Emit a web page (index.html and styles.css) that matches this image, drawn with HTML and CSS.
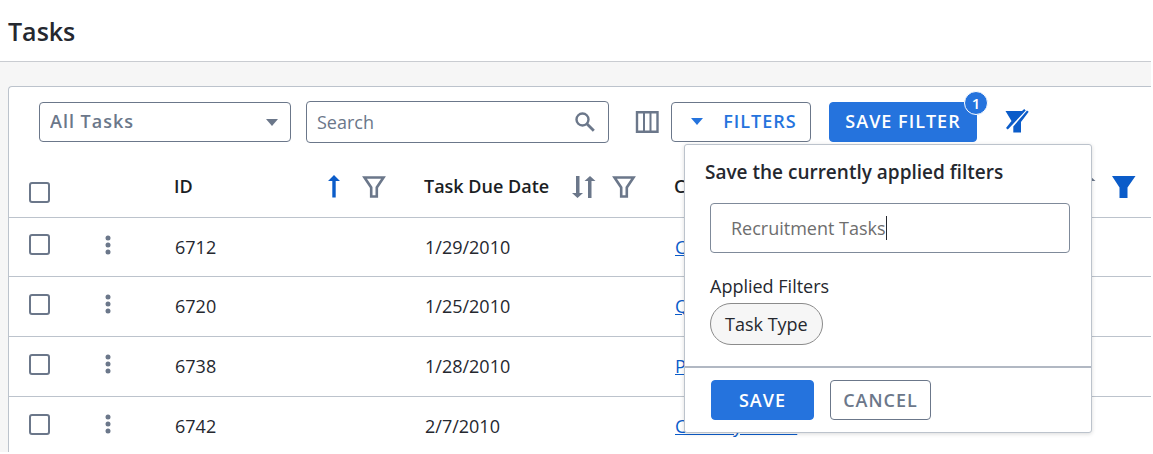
FILE: index.html
```html
<!DOCTYPE html>
<html lang="en">
<head>
    <meta charset="UTF-8">
    <title>Tasks</title>
    <link rel="stylesheet" href="styles.css">
</head>
<body>
<svg class="sprite" aria-hidden="true">
    <symbol id="funnel" viewBox="0 0 24 24">
        <path d="M2.500 2.500h19l-6.700 10v9h-5.600v-9z" fill="none" stroke="currentColor" stroke-width="2.600"/>
    </symbol>
    <symbol id="funnel-full" viewBox="0 0 24 24">
        <path d="M0 1h23.500l-8 11.500v10.500h-8v-10.500z" fill="currentColor"/>
    </symbol>
    <symbol id="sort" viewBox="0 0 24 24">
        <path d="M4 1h3.500v17h3.500l-5.500 5-5.500-5h4zM16 23h3.500v-17h4l-5.500-5-5.500 5h3.500z" fill="currentColor"/>
    </symbol>
    <symbol id="sort-up" viewBox="0 0 24 24">
        <path d="M10.300 22.500h3.400v-16.500h4.300l-6-6-6 6h4.300z" fill="currentColor"/>
    </symbol>
    <symbol id="dots" viewBox="0 0 8 20">
        <g fill="currentColor"><circle cx="4" cy="3" r="2.500"/><circle cx="4" cy="10" r="2.500"/><circle cx="4" cy="17" r="2.500"/></g>
    </symbol>
    <symbol id="caret" viewBox="0 0 12 7">
        <path d="M0 0h12l-6 7z" fill="currentColor"/>
    </symbol>
</svg>
<div class="page">
    <header class="page-header">
        <h1>Tasks</h1>
    </header>
    <main class="panel">
        <div class="toolbar">
            <div class="select-box">
                <select aria-label="Task view">
                    <option>All Tasks</option>
                </select>
                <svg class="caret"><use href="#caret"/></svg>
            </div>
            <div class="search-box">
                <input type="search" placeholder="Search" aria-label="Search">
                <svg class="search-icon" viewBox="0 0 20 20">
                    <circle cx="7.500" cy="7.500" r="6" fill="none" stroke="currentColor" stroke-width="2.400"/>
                    <path d="M11.800 11.800l7 7" stroke="currentColor" stroke-width="2.800"/>
                </svg>
            </div>
            <button class="icon-btn columns-btn" type="button" aria-label="Columns">
                <svg class="icon" viewBox="0 0 24 24">
                    <path d="M2 2.300h20.500v19.400h-20.500z" fill="none" stroke="currentColor" stroke-width="2.400"/>
                    <path d="M9 2v20M15.500 2v20" stroke="currentColor" stroke-width="2"/>
                </svg>
            </button>
            <button class="btn filters-btn" type="button"><svg class="caret"><use href="#caret"/></svg>FILTERS</button>
            <div class="save-filter">
                <button class="btn primary" type="button">SAVE FILTER</button>
                <span class="badge">1</span>
                <form class="popover">
                    <div class="popover-body">
                        <h2><label for="filter-name">Save the currently applied filters</label></h2>
                        <div class="name-box">
                            <input id="filter-name" type="text" value="Recruitment Tasks">
                            <span class="cursor"></span>
                        </div>
                        <p>Applied Filters</p>
                        <span class="chip">Task Type</span>
                    </div>
                    <div class="popover-footer">
                        <button class="btn primary save" type="button">SAVE</button>
                        <button class="btn cancel" type="button">CANCEL</button>
                    </div>
                </form>
            </div>
            <button class="icon-btn clear-btn" type="button" aria-label="Clear filters">
                <svg class="icon" viewBox="0 -2 24 24">
                    <path d="M.5 0h16.500l2.200-2 1.500 1.500-17.900 19-1.800-1.500 5.500-7z" fill="currentColor"/>
                    <path d="M22 -.5l1.700 1.200-7.700 10.300v10.500h-7.700v-6z" fill="currentColor"/>
                </svg>
            </button>
        </div>
        <table class="tasks">
            <colgroup>
                <col class="col-check">
                <col class="col-menu">
                <col class="col-data">
                <col class="col-data">
                <col class="col-data">
                <col class="col-data">
            </colgroup>
            <thead>
            <tr>
                <th><input type="checkbox" aria-label="Select all"></th>
                <th></th>
                <th>
                    <div class="head">
                        <span>ID</span>
                        <svg class="icon active"><use href="#sort-up"/></svg>
                        <svg class="icon"><use href="#funnel"/></svg>
                    </div>
                </th>
                <th>
                    <div class="head">
                        <span>Task Due Date</span>
                        <svg class="icon"><use href="#sort"/></svg>
                        <svg class="icon"><use href="#funnel"/></svg>
                    </div>
                </th>
                <th>
                    <div class="head">
                        <span>C</span>
                        <svg class="icon"><use href="#sort"/></svg>
                        <svg class="icon"><use href="#funnel"/></svg>
                    </div>
                </th>
                <th>
                    <div class="head">
                        <span></span>
                        <svg class="icon"><use href="#sort"/></svg>
                        <svg class="icon active"><use href="#funnel-full"/></svg>
                    </div>
                </th>
            </tr>
            </thead>
            <tbody>
            <tr>
                <td><input type="checkbox" aria-label="Select 6712"></td>
                <td><button class="icon-btn" type="button" aria-label="Actions"><svg class="dots"><use href="#dots"/></svg></button></td>
                <td>6712</td>
                <td>1/29/2010</td>
                <td><a href="#">C</a></td>
                <td></td>
            </tr>
            <tr>
                <td><input type="checkbox" aria-label="Select 6720"></td>
                <td><button class="icon-btn" type="button" aria-label="Actions"><svg class="dots"><use href="#dots"/></svg></button></td>
                <td>6720</td>
                <td>1/25/2010</td>
                <td><a href="#">Q</a></td>
                <td></td>
            </tr>
            <tr>
                <td><input type="checkbox" aria-label="Select 6738"></td>
                <td><button class="icon-btn" type="button" aria-label="Actions"><svg class="dots"><use href="#dots"/></svg></button></td>
                <td>6738</td>
                <td>1/28/2010</td>
                <td><a href="#">P</a></td>
                <td></td>
            </tr>
            <tr>
                <td><input type="checkbox" aria-label="Select 6742"></td>
                <td><button class="icon-btn" type="button" aria-label="Actions"><svg class="dots"><use href="#dots"/></svg></button></td>
                <td>6742</td>
                <td>2/7/2010</td>
                <td><a href="#">Country Check</a></td>
                <td></td>
            </tr>
            </tbody>
        </table>
    </main>
</div>
</body>
</html>
```
FILE: styles.css
```css
* {
    margin: 0;
    padding: 0;
    box-sizing: border-box;
}

body {
    padding: 0 2px 2px 0;
    height: 100vh;
    overflow: hidden;
    background-color: #fff;
    font-family: "Open Sans", sans-serif;
    font-size: 18px;
    color: #25282f;
}

input, select, button {
    font: inherit;
    color: inherit;
}

svg {
    display: block;
    flex: none;
}

.sprite {
    position: absolute;
    width: 0;
    height: 0;
}

.page {
    height: 100%;
    display: flex;
    flex-direction: column;
    overflow: hidden;
    background-color: #f6f6f6;
}

.page-header {
    padding: 13px 8px 12px;
    background-color: #fff;
    border-bottom: 1px solid #c9ccd1;
}

.page-header h1 {
    font-size: 25px;
    line-height: 36px;
    font-weight: 600;
}

.panel {
    flex: 1;
    margin: 24px 0 0 8px;
    background-color: #fff;
    border: 1px solid #bcc3cc;
    border-width: 1px 0 0 1px;
    border-radius: 4px 0 0 0;
}

/* toolbar */
.toolbar {
    display: flex;
    align-items: center;
    gap: 12px;
    padding: 14px 30px;
    color: #6b778a;
}

.select-box {
    position: relative;
    flex: 0 1 252px;
}

.select-box select {
    display: block;
    width: 100%;
    height: 40px;
    padding: 0 10px 2px;
    appearance: none;
    background-color: #fff;
    border: 1px solid #6b778a;
    border-radius: 4px;
    font-weight: 600;
    letter-spacing: 1px;
}

.caret {
    width: 12px;
    height: 7px;
}

.select-box .caret {
    position: absolute;
    right: 13px;
    top: 17px;
    pointer-events: none;
}

.search-box {
    flex: 0 1 303px;
    margin-left: 3px;
    height: 42px;
    padding: 0 13px 0 10px;
    display: flex;
    align-items: center;
    border: 1px solid #6b778a;
    border-radius: 4px;
}

.search-box input {
    flex: 1;
    min-width: 0;
    border: 0;
    outline: 0;
    appearance: none;
    background: none;
}

.search-box input::placeholder {
    color: #6b778a;
}

.search-icon {
    width: 20px;
    height: 20px;
}

.icon {
    width: 24px;
    height: 24px;
}

.icon-btn {
    border: 0;
    background: none;
    color: #6b778a;
}

.columns-btn {
    margin-left: 14px;
}

.btn {
    display: flex;
    align-items: center;
    justify-content: center;
    height: 40px;
    padding-bottom: 2px;
    border: 1px solid #6b778a;
    border-radius: 4px;
    background-color: #fff;
    color: #6b778a;
    font-weight: 600;
    letter-spacing: 1px;
    white-space: nowrap;
}

.btn.primary {
    background-color: #2573dd;
    border-color: #2573dd;
    color: #fff;
}

.filters-btn {
    width: 140px;
    padding-left: 6px;
    gap: 20px;
    color: #2573dd;
}

.save-filter {
    position: relative;
    margin-left: 6px;
}

.save-filter > .btn {
    width: 148px;
}

.badge {
    position: absolute;
    top: -11px;
    right: -11px;
    width: 24px;
    height: 24px;
    border-radius: 50%;
    border: 1px solid #fff;
    background-color: #2573dd;
    color: #fff;
    font-size: 15px;
    font-weight: 600;
    line-height: 22px;
    text-align: center;
}

.clear-btn {
    margin-left: 16px;
    padding-bottom: 3px;
    color: #0b5cc9;
}

/* save filter popover */
.popover {
    position: absolute;
    z-index: 1;
    top: 42px;
    right: -115px;
    width: 408px;
    background-color: #fff;
    border: 1px solid #bcc3cc;
    border-radius: 3px;
    box-shadow: 0 1px 4px rgba(0, 0, 0, .15);
    color: #25282f;
}

.popover-body {
    padding: 12px 21px 21px 25px;
}

.popover h2 {
    margin: 0 -5px;
    font-size: 19px;
    line-height: 30px;
    font-weight: 600;
}

.name-box {
    display: flex;
    align-items: center;
    height: 50px;
    margin-top: 16px;
    padding: 0 20px;
    border: 1px solid #7f8a9a;
    border-radius: 4px;
    color: #6e6e6e;
}

.name-box input {
    field-sizing: content;
    max-width: 100%;
    border: 0;
    outline: 0;
    background: none;
}

.cursor {
    width: 1px;
    height: 24px;
    background-color: #25282f;
}

.popover p {
    margin-top: 20px;
    line-height: 26px;
}

.chip {
    display: inline-block;
    height: 42px;
    margin-top: 4px;
    padding: 0 14px;
    line-height: 40px;
    border: 1px solid #8b8b8b;
    border-radius: 21px;
    background-color: #f6f6f6;
}

.popover-footer {
    display: flex;
    gap: 16px;
    padding: 12px 26px;
    border-top: 2px solid #b1b8c3;
}

.popover-footer .btn {
    padding: 0;
}

.save {
    width: 103px;
}

.cancel {
    width: 101px;
}

/* task list */
.tasks {
    width: 1150px;
    min-width: 100%;
    table-layout: fixed;
    border-collapse: collapse;
}

.col-check {
    width: 62px;
}

.col-menu {
    width: 88px;
}

.col-data {
    width: 250px;
}

.tasks th, .tasks td {
    height: 60px;
    padding: 0 23px 0 15px;
    border-bottom: 1px solid #bcc3cc;
    text-align: left;
    vertical-align: middle;
}

.tasks th {
    font-weight: 550;
}

.tasks td {
    padding-left: 16px;
}

.tasks tbody tr:first-child td {
    height: 59px;
}

.tasks th:first-child {
    padding: 12px 0 0 20px;
}

.tasks td:first-child {
    padding: 0 0 4px 20px;
}

.tasks td:nth-child(2) {
    padding: 0 0 4px 33px;
}

.head {
    display: flex;
    align-items: center;
    gap: 16px;
    color: #6b778a;
}

.head span {
    flex: 1;
    padding-bottom: 2px;
    color: #1b1e24;
}

.active {
    color: #0b5cc9;
}

.tasks input {
    display: block;
    width: 21px;
    height: 21px;
    appearance: none;
    border: 2px solid #6b778a;
    border-radius: 3px;
    background-color: #fff;
}

.tasks .icon-btn {
    display: block;
}

.dots {
    width: 8px;
    height: 20px;
}

.tasks a {
    color: #0b5cc9;
}
```
